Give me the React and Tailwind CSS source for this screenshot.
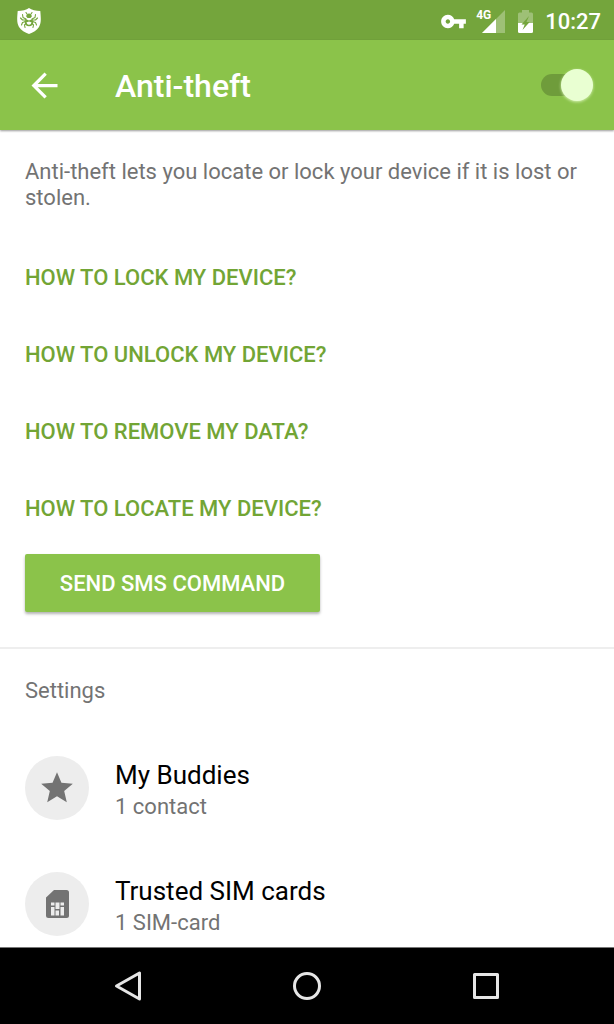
import React, { useState } from "react";

const questions = [
  "How to lock my device?",
  "How to unlock my device?",
  "How to remove my data?",
  "How to locate my device?",
];

const StarIcon = () => (
  <svg viewBox="0 0 24 24" className="size-[38px]" fill="currentColor">
    <path d="M12 17.27 18.18 21l-1.64-7.03L22 9.24l-7.19-.61L12 2 9.19 8.63 2 9.24l5.46 4.73L5.82 21z" />
  </svg>
);

const SimIcon = () => (
  <svg viewBox="0 0 23 28" className="h-7 w-[23px]">
    <path
      fill="currentColor"
      d="M8 0h12.500a2.500 2.500 0 0 1 2.500 2.500v23a2.500 2.500 0 0 1-2.500 2.500h-18A2.500 2.500 0 0 1 0 25.500V7.500z"
    />
    <path
      fill="#ededed"
      d="M5 12.500h3.500v3H5zM5 17h3.500v8.500H5zM9.500 12.500h4V19h-4zM9.500 20.500h3.500v5H9.500zM14.500 12.500H18v3h-3.500zM14.500 17H18v8.500h-3.500z"
    />
  </svg>
);

const settings = [
  { title: "My Buddies", detail: "1 contact", Icon: StarIcon },
  { title: "Trusted SIM cards", detail: "1 SIM-card", Icon: SimIcon },
];

const ShieldIcon = () => (
  <svg viewBox="0 0 24 26" className="h-[26px] w-6">
    <path fill="#fff" d="M12 0c2.500 2 7 3 11.300 3 .7 8 1 12-1.300 16-2 3.200-6 5.500-10 7-4-1.500-8-3.800-10-7C-.3 15 0 11 .7 3 5 3 9.500 2 12 0z" />
    <g fill="none" stroke="#74a53c" strokeWidth="1.100" strokeLinecap="round" strokeLinejoin="round">
      <path d="M9 11 6 9.500 5.500 6.500M9 12 5.500 12 3.500 10M8.500 13.500 5.500 14.500 4.500 17M9 15.500 7.500 17 8 19.500" />
      <path d="M15 11l3-1.500.5-3M15 12h3.500l2-2M15.500 13.500l3 1 1 2.500M15 15.500l1.500 1.500-.5 2.500" />
      <path d="M8.500 13c0 6 7 6 7 0" strokeWidth="1.700" />
      <path d="M10 6 9 4.500M14 6l1-1.500" />
    </g>
    <path fill="#74a53c" d="M9.200 8.500c0-4 5.600-4 5.600 0L13.500 10h-3zM8.500 11l3.500 1.500 3.500-1.500-.5 3.500L12 13.500 9 14.500z" />
  </svg>
);

const StatusBar = () => (
  <div className="flex h-10 shrink-0 items-center bg-[#74a53c] pt-0.5 pr-[13px] pl-[17px] text-white">
    <ShieldIcon />
    <svg viewBox="0 0 24 24" className="ml-auto size-[27px]" fill="currentColor">
      <path d="M12.650 10C11.830 7.670 9.610 6 7 6c-3.310 0-6 2.690-6 6s2.690 6 6 6c2.610 0 4.830-1.670 5.650-4H17v4h4v-4h2v-4H12.650zM7 14c-1.100 0-2-.9-2-2s.9-2 2-2 2 .9 2 2-.9 2-2 2z" />
    </svg>
    <div className="relative ml-[15px]">
      <span className="absolute -top-px -left-1.5 text-xs leading-3 font-bold">4G</span>
      <svg viewBox="0 0 23 23" className="size-[23px]" fill="currentColor">
        <path d="M23 0v23H0z" opacity=".3" />
        <path d="M14 9v14H0z" />
      </svg>
    </div>
    <svg viewBox="0 0 15 23" className="ml-[13px] h-[23px] w-[15px]">
      <path fill="#fff" opacity=".3" d="M4 0h7v2.500h2.500A1.500 1.500 0 0 1 15 4v9H0V4a1.500 1.500 0 0 1 1.500-1.500H4z" />
      <path fill="#fff" d="M0 13h15v8.500a1.500 1.500 0 0 1-1.500 1.500h-12A1.500 1.500 0 0 1 0 21.500z" />
      <path fill="#74a53c" d="M11 6 3.500 14.500h3.200L4.500 20l7.200-8H8.500z" />
    </svg>
    <time className="ml-3 pt-0.5 leading-7 font-medium">10:27</time>
  </div>
);

const NavBar = () => (
  <nav className="flex h-[77px] shrink-0 items-center justify-center border-t border-[#777] bg-black text-[#e6e6e6]">
    <button aria-label="Back" className="flex w-[179px] justify-center">
      <svg viewBox="0 0 32 32" className="size-8" fill="none" stroke="currentColor" strokeWidth="3" strokeLinejoin="round">
        <path d="M4.500 16 27.500 3v26z" />
      </svg>
    </button>
    <button aria-label="Home" className="flex w-[179px] justify-center">
      <svg viewBox="0 0 32 32" className="size-8" fill="none" stroke="currentColor" strokeWidth="3">
        <circle cx="16" cy="16" r="12.500" />
      </svg>
    </button>
    <button aria-label="Recent apps" className="flex w-[179px] justify-center">
      <svg viewBox="0 0 32 32" className="size-8" fill="none" stroke="currentColor" strokeWidth="3" strokeLinejoin="round">
        <path d="M4.500 4.500h23v23h-23z" />
      </svg>
    </button>
  </nav>
);

const App = () => {
  const [enabled, setEnabled] = useState(true);

  return (
    <div className="flex h-screen flex-col bg-white font-[Roboto,sans-serif] text-[22px] leading-[26px] text-[#737373]">
      <StatusBar />

      <header className="z-10 flex h-[90px] shrink-0 items-center gap-[26px] bg-[#8bc34a] pr-[21px] pl-[25px] text-white shadow-[0_1px_2px_rgba(0,0,0,0.4)]">
        <button aria-label="Go back" className="w-16">
          <svg viewBox="0 0 24 24" className="size-[39px]" fill="currentColor">
            <path d="M20 11H7.830l5.590-5.590L12 4l-8 8 8 8 1.410-1.410L7.830 13H20v-2z" />
          </svg>
        </button>
        <h1 className="pt-0.5 text-[32px] leading-10 font-medium">Anti-theft</h1>
        <label className="relative ml-auto flex h-8 w-[52px] cursor-pointer items-center">
          <input
            type="checkbox"
            aria-label="Anti-theft"
            className="peer sr-only"
            checked={enabled}
            onChange={(e) => setEnabled(e.target.checked)}
          />
          <span className="h-[22px] w-11 rounded-full bg-[#6f9c3b]" />
          <span className="absolute left-0 size-8 rounded-full bg-[#e9ffd2] shadow-[0_1px_3px_#d4f0b0] peer-checked:left-5" />
        </label>
      </header>

      <main className="min-h-0 flex-1 overflow-y-auto [scrollbar-width:none]">
        <section className="border-b-2 border-[#eee] px-[25px] pt-[29px] pb-[35px]">
          <p>Anti-theft lets you locate or lock your device if it is lost or stolen.</p>
          <ul className="mt-7 font-medium text-[#72a535]">
            {questions.map((question) => (
              <li key={question} className="flex h-[77px] items-center">
                <a href="#" className="uppercase">
                  {question}
                </a>
              </li>
            ))}
          </ul>
          <button className="mt-[7px] h-[58px] min-w-[295px] rounded-xs bg-[#8bc34a] px-8 pt-0.5 font-medium text-white uppercase shadow-[0_2px_3px_rgba(0,0,0,0.3)]">
            Send SMS command
          </button>
        </section>

        <section>
          <h2 className="px-[25px] pt-[29px] pb-[26px]">Settings</h2>
          {settings.map(({ title, detail, Icon }) => (
            <button key={title} className="flex h-[116px] w-full items-center gap-[26px] px-[25px] text-left">
              <span className="flex size-16 items-center justify-center rounded-full bg-[#ededed]">
                <Icon />
              </span>
              <span className="pt-[5px]">
                <span className="block text-[26px] leading-8 text-black">{title}</span>
                <span className="block leading-8">{detail}</span>
              </span>
            </button>
          ))}
        </section>
      </main>

      <NavBar />
    </div>
  );
};

export default App;
